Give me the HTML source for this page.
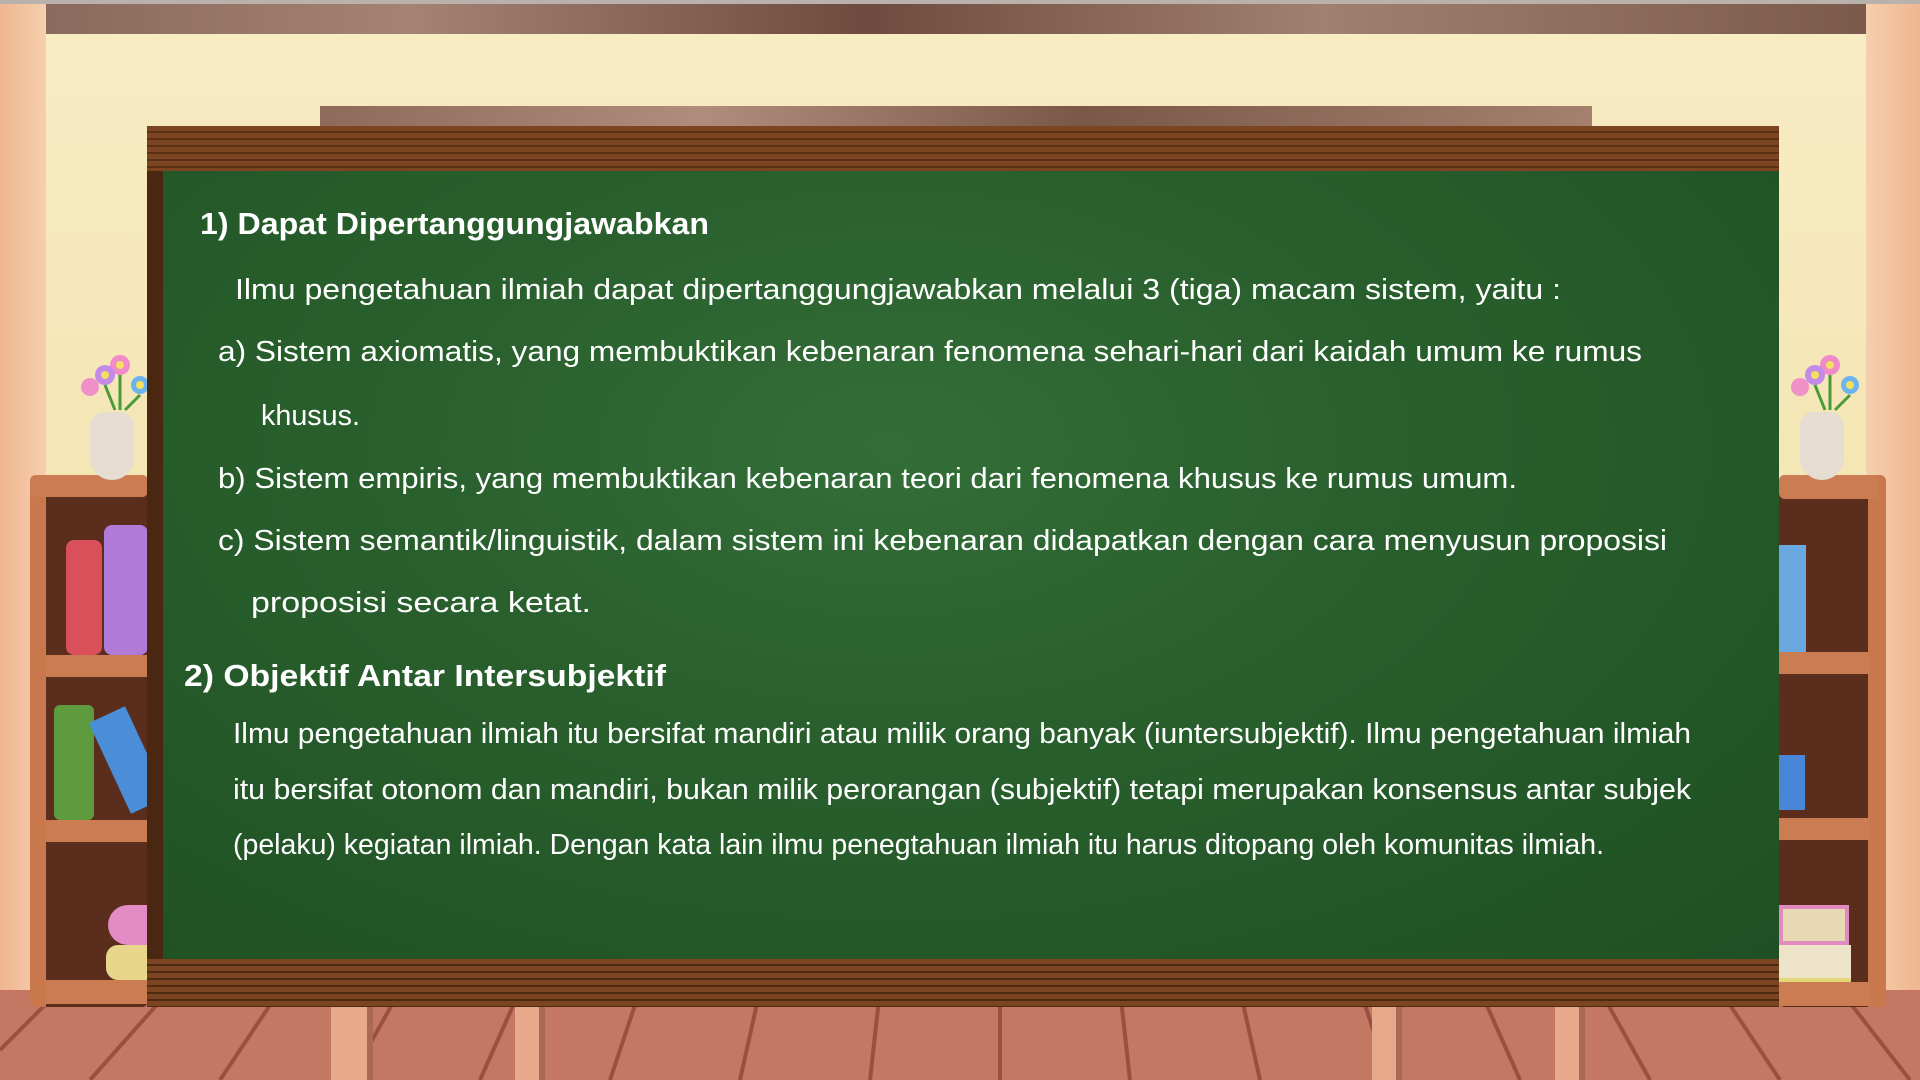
<!DOCTYPE html>
<html><head><meta charset="utf-8">
<style>
html,body{margin:0;padding:0;width:1920px;height:1080px;overflow:hidden;}
body{position:relative;background:#f6e8bb;font-family:"Liberation Sans",sans-serif;}
.abs{position:absolute;}
</style></head><body>
<div class="abs" style="left:0;top:0;width:1920px;height:1080px;background:linear-gradient(180deg,#f8ecc4 0%,#f5e6b6 40%,#f3e2b0 100%);"></div>
<div class="abs" style="left:0;top:0;width:46px;height:1080px;background:linear-gradient(90deg,#efb58f,#f6cfae);"></div>
<div class="abs" style="left:1866px;top:0;width:54px;height:1080px;background:linear-gradient(90deg,#f6cfae,#efb58f);"></div>
<div class="abs" style="left:0;top:0;width:1920px;height:4px;background:#b9b1ac"></div>
<div class="abs" style="left:46px;top:4px;width:1820px;height:30px;background:linear-gradient(90deg,#8a6a5c,#a48274 20%,#6e4b3e 45%,#a08070 70%,#7b5a4c);"></div>
<div class="abs" style="left:0;top:990px;width:1920px;height:90px;background:#c47864;overflow:hidden">
<svg width="1920" height="90" style="position:absolute;left:0;top:0">
<g stroke="#9b4f40" stroke-width="4">
<line x1="60" y1="0" x2="0" y2="60"/><line x1="170" y1="0" x2="90" y2="90"/><line x1="280" y1="0" x2="220" y2="90"/><line x1="400" y1="0" x2="350" y2="90"/><line x1="520" y1="0" x2="480" y2="90"/><line x1="640" y1="0" x2="610" y2="90"/><line x1="760" y1="0" x2="740" y2="90"/><line x1="880" y1="0" x2="870" y2="90"/><line x1="1000" y1="0" x2="1000" y2="90"/><line x1="1120" y1="0" x2="1130" y2="90"/><line x1="1240" y1="0" x2="1260" y2="90"/><line x1="1360" y1="0" x2="1390" y2="90"/><line x1="1480" y1="0" x2="1520" y2="90"/><line x1="1600" y1="0" x2="1650" y2="90"/><line x1="1720" y1="0" x2="1780" y2="90"/><line x1="1840" y1="0" x2="1910" y2="90"/>
</g></svg></div>
<div class="abs" style="left:331px;top:1000px;width:36px;height:80px;background:#e6a98a;border-right:6px solid #a86a52"></div>
<div class="abs" style="left:515px;top:1000px;width:24px;height:80px;background:#e6a98a;border-right:6px solid #a86a52"></div>
<div class="abs" style="left:1372px;top:1000px;width:24px;height:80px;background:#e6a98a;border-right:6px solid #a86a52"></div>
<div class="abs" style="left:1555px;top:1000px;width:24px;height:80px;background:#e6a98a;border-right:6px solid #a86a52"></div>
<div class="abs" style="left:30px;top:475px;width:118px;height:532px;background:#5a2d1c;border-left:16px solid #c9774d;border-radius:6px;box-sizing:border-box"></div>
<div class="abs" style="left:30px;top:475px;width:118px;height:22px;background:#cc7c52;border-radius:6px"></div>
<div class="abs" style="left:46px;top:655px;width:102px;height:22px;background:#cc7c52"></div>
<div class="abs" style="left:46px;top:820px;width:102px;height:22px;background:#cc7c52"></div>
<div class="abs" style="left:46px;top:980px;width:102px;height:24px;background:#cc7c52"></div>
<div class="abs" style="left:66px;top:540px;width:36px;height:115px;background:#d9505a;border-radius:8px"></div>
<div class="abs" style="left:104px;top:525px;width:44px;height:130px;background:#b07ad8;border-radius:8px"></div>
<div class="abs" style="left:54px;top:705px;width:40px;height:115px;background:#5e9a3e;border-radius:6px"></div>
<div class="abs" style="left:108px;top:710px;width:40px;height:100px;background:#4a8ed8;transform:rotate(-25deg)"></div>
<div class="abs" style="left:108px;top:905px;width:40px;height:40px;background:#e38bc4;border-radius:20px 0 0 20px"></div>
<div class="abs" style="left:106px;top:945px;width:42px;height:35px;background:#e8d78a;border-radius:12px 0 0 12px"></div>
<div class="abs" style="left:1779px;top:475px;width:107px;height:532px;background:#5a2d1c;border-right:18px solid #c9774d;border-radius:6px;box-sizing:border-box"></div>
<div class="abs" style="left:1779px;top:475px;width:100px;height:24px;background:#cc7c52;border-radius:6px"></div>
<div class="abs" style="left:1779px;top:652px;width:90px;height:22px;background:#cc7c52"></div>
<div class="abs" style="left:1779px;top:818px;width:90px;height:22px;background:#cc7c52"></div>
<div class="abs" style="left:1779px;top:982px;width:90px;height:24px;background:#cc7c52"></div>
<div class="abs" style="left:1779px;top:545px;width:27px;height:107px;background:#6aa8e0"></div>
<div class="abs" style="left:1779px;top:755px;width:26px;height:55px;background:#4a86d8"></div>
<div class="abs" style="left:1779px;top:905px;width:70px;height:40px;background:#e8d8b4;border:4px solid #e08ac0;box-sizing:border-box"></div>
<div class="abs" style="left:1779px;top:945px;width:72px;height:37px;background:#ece3c8;border-bottom:4px solid #e5d87a;box-sizing:border-box"></div>
<div class="abs" style="left:90px;top:412px;width:44px;height:68px;background:#e6ddd2;border-radius:14px 14px 22px 22px"></div>
<div class="abs" style="left:1800px;top:412px;width:44px;height:68px;background:#e6ddd2;border-radius:14px 14px 22px 22px"></div>
<svg class="abs" style="left:70px;top:345px" width="90" height="70"><g><circle cx="50" cy="20" r="10" fill="#f08ac8"/><circle cx="35" cy="30" r="10" fill="#c38ae8"/><circle cx="20" cy="42" r="9" fill="#f090c8"/><circle cx="70" cy="40" r="9" fill="#6cb4ec"/><circle cx="50" cy="20" r="4" fill="#f3e060"/><circle cx="35" cy="30" r="4" fill="#f3e060"/><circle cx="70" cy="40" r="4" fill="#f3e060"/><path d="M50 30 L50 65 M35 40 L45 65 M70 50 L55 65" stroke="#4a9a3a" stroke-width="3"/></g></svg>
<svg class="abs" style="left:1780px;top:345px" width="90" height="70"><g><circle cx="50" cy="20" r="10" fill="#f08ac8"/><circle cx="35" cy="30" r="10" fill="#c38ae8"/><circle cx="20" cy="42" r="9" fill="#f090c8"/><circle cx="70" cy="40" r="9" fill="#6cb4ec"/><circle cx="50" cy="20" r="4" fill="#f3e060"/><circle cx="35" cy="30" r="4" fill="#f3e060"/><circle cx="70" cy="40" r="4" fill="#f3e060"/><path d="M50 30 L50 65 M35 40 L45 65 M70 50 L55 65" stroke="#4a9a3a" stroke-width="3"/></g></svg>
<div class="abs" style="left:320px;top:106px;width:1272px;height:22px;background:linear-gradient(90deg,#8e6a5a,#b08c7c 30%,#7a5848 60%,#a4806e);"></div>
<div class="abs" style="left:147px;top:126px;width:1632px;height:881px;background:#4a2710"></div>
<div class="abs" style="left:147px;top:126px;width:1632px;height:45px;background:repeating-linear-gradient(180deg,#7a4520 0,#7a4520 5px,#5a3012 5px,#5a3012 7px);"></div>
<div class="abs" style="left:163px;top:171px;width:1616px;height:789px;background:radial-gradient(ellipse at 45% 35%,#336e38 0%,#295f2d 40%,#1f5023 100%);"></div>
<div class="abs" style="left:147px;top:959px;width:1632px;height:48px;background:repeating-linear-gradient(180deg,#7a4520 0,#7a4520 5px,#4e2a10 5px,#4e2a10 7px);"></div>
<svg class="abs" style="left:0;top:0" width="1920" height="1080" font-family="'Liberation Sans Narrow','Liberation Sans',sans-serif" fill="#ffffff">
<text x="200" y="234" font-size="31" font-weight="bold" textLength="509" lengthAdjust="spacingAndGlyphs">1) Dapat Dipertanggungjawabkan</text>
<text x="235" y="299" font-size="29" textLength="1326" lengthAdjust="spacingAndGlyphs">Ilmu pengetahuan ilmiah dapat dipertanggungjawabkan melalui 3 (tiga) macam sistem, yaitu :</text>
<text x="218" y="361" font-size="29" textLength="1424" lengthAdjust="spacingAndGlyphs">a) Sistem axiomatis, yang membuktikan kebenaran fenomena sehari-hari dari kaidah umum ke rumus</text>
<text x="261" y="425" font-size="29" textLength="99" lengthAdjust="spacingAndGlyphs">khusus.</text>
<text x="218" y="488" font-size="29" textLength="1299" lengthAdjust="spacingAndGlyphs">b) Sistem empiris, yang membuktikan kebenaran teori dari fenomena khusus ke rumus umum.</text>
<text x="218" y="550" font-size="29" textLength="1449" lengthAdjust="spacingAndGlyphs">c) Sistem semantik/linguistik, dalam sistem ini kebenaran didapatkan dengan cara menyusun proposisi</text>
<text x="251" y="612" font-size="29" textLength="340" lengthAdjust="spacingAndGlyphs">proposisi secara ketat.</text>
<text x="184" y="686" font-size="31" font-weight="bold" textLength="482" lengthAdjust="spacingAndGlyphs">2) Objektif Antar Intersubjektif</text>
<text x="233" y="743" font-size="29" textLength="1458" lengthAdjust="spacingAndGlyphs">Ilmu pengetahuan ilmiah itu bersifat mandiri atau milik orang banyak (iuntersubjektif). Ilmu pengetahuan ilmiah</text>
<text x="233" y="799" font-size="29" textLength="1458" lengthAdjust="spacingAndGlyphs">itu bersifat otonom dan mandiri, bukan milik perorangan (subjektif) tetapi merupakan konsensus antar subjek</text>
<text x="233" y="854" font-size="29" textLength="1371" lengthAdjust="spacingAndGlyphs">(pelaku) kegiatan ilmiah. Dengan kata lain ilmu penegtahuan ilmiah itu harus ditopang oleh komunitas ilmiah.</text>
</svg>
</body></html>
